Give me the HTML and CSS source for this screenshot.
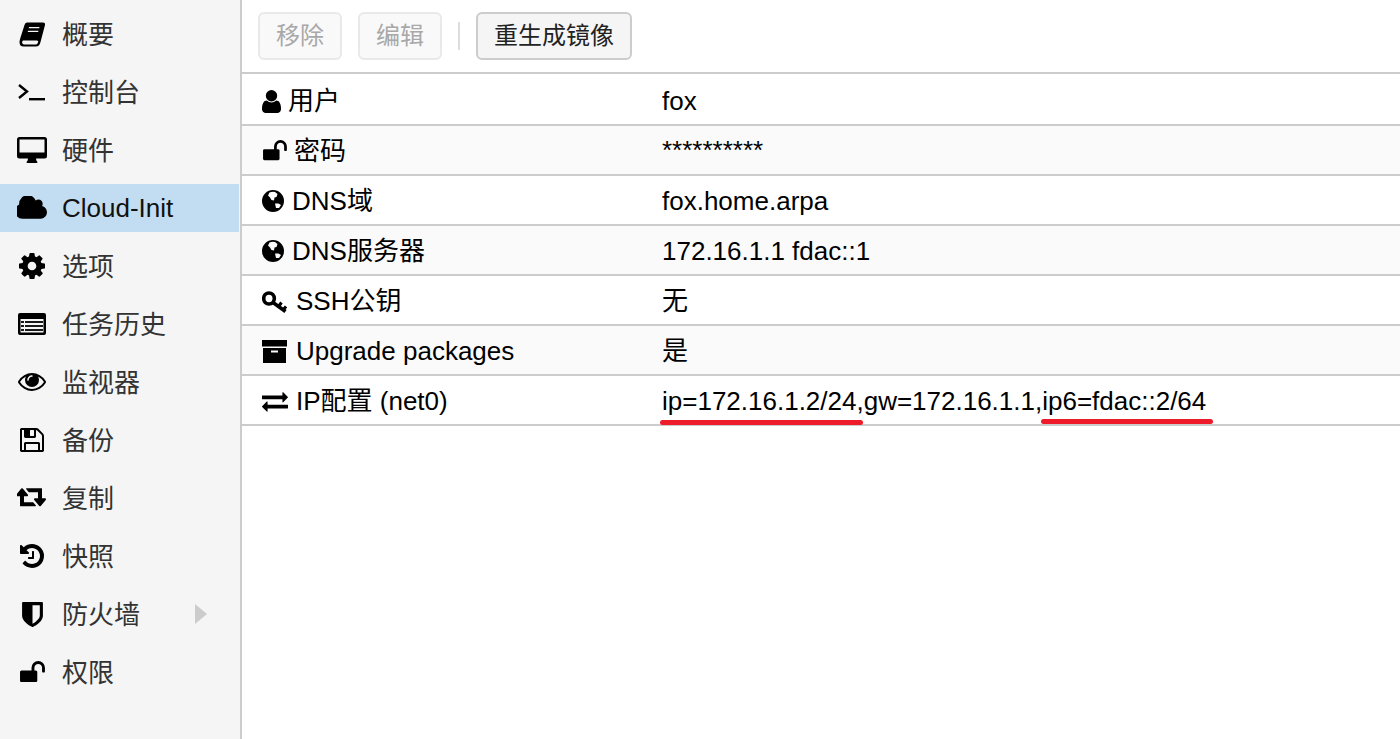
FILE: index.html
```html
<!DOCTYPE html>
<html lang="zh-CN">
<head>
<meta charset="utf-8">
<title>Cloud-Init</title>
<link rel="stylesheet" href="styles.css">
</head>
<body>
<div class="app">
  <nav class="sidebar">
    <div class="nav-item"><span class="nav-icon"><svg width="27" height="25" viewBox="0 0 27 25"><path fill-rule="evenodd" d="M8 .5H24Q26.500 .5 26 3L21.500 20Q20.500 24.500 17 24.500H4.500Q.5 24.500 .5 20Q.5 18.500 1.500 15.500L5.500 3Q6 .5 8 .5ZM10 5L9.700 6.200H20.200L20.500 5ZM9 8.800L8.700 10H19.200L19.500 8.800ZM4 18.500Q2.700 19.500 3.200 21Q3.800 22.500 5.500 22.500H16.500Q18 22.500 18.800 21L19.200 19Q19 18.500 17.500 18.500Z"/></svg></span><span>概要</span></div>
    <div class="nav-item"><span class="nav-icon"><svg width="28" height="18" viewBox="0 0 28 18"><path d="M1 2L9 8.500L1 15" fill="none" stroke="#000" stroke-width="2.400"/><rect x="11" y="15" width="16" height="2.400"/></svg></span><span>控制台</span></div>
    <div class="nav-item"><span class="nav-icon"><svg width="30" height="26" viewBox="0 0 30 26"><path fill-rule="evenodd" d="M2.500 0H27.500Q30 0 30 2.500V19Q30 21.500 27.500 21.500H19Q19 23.500 20.500 25Q20.500 26 19.500 26H10.500Q9.500 26 9.500 25Q11 23.500 11 21.500H2.500Q0 21.500 0 19V2.500Q0 0 2.500 0ZM2.500 2.500V15.500H27.500V2.500Z"/></svg></span><span>硬件</span></div>
    <div class="nav-item selected"><span class="nav-icon"><svg width="30" height="24" viewBox="64 256 1792 1280"><path d="M1856 1152q0 159-112.500 271.500t-271.500 112.500h-1088q-185 0-316.500-131.500t-131.500-316.500q0-132 71-241.500t187-163.500q-2-28-2-43 0-212 150-362t362-150q158 0 286.500 88t187.500 230q70-62 166-62 106 0 181 75t75 181q0 75-41 138 129 30 213 134.500t84 239.500z"/></svg></span><span>Cloud-Init</span></div>
    <div class="nav-item"><span class="nav-icon"><svg width="26" height="26" viewBox="128 128 1536 1536"><path d="M1152 896q0-106-75-181t-181-75-181 75-75 181 75 181 181 75 181-75 75-181zm512-109v222q0 12-8 23t-20 13l-185 28q-19 54-39 91 35 50 107 138 10 12 10 25t-9 23q-27 37-99 108t-94 71q-12 0-26-9l-138-108q-44 23-91 38-16 136-29 186-7 28-36 28h-222q-14 0-24.500-8.500t-11.500-21.500l-28-184q-49-16-90-37l-141 107q-10 9-25 9-14 0-25-11-126-114-165-168-7-10-7-23 0-12 8-23 15-21 51-66.500t54-70.500q-27-50-41-99l-183-27q-13-2-21-12.500t-8-23.500v-222q0-12 8-23t19-13l186-28q14-46 39-92-40-57-107-138-10-12-10-24 0-10 9-23 26-36 98.500-107.500t94.500-71.500q13 0 26 10l138 107q44-23 91-38 16-136 29-186 7-28 36-28h222q14 0 24.500 8.500t11.500 21.500l28 184q49 16 90 37l142-107q9-9 24-9 13 0 25 10 129 119 165 170 7 8 7 22 0 12-8 23-15 21-51 66.500t-54 70.500q26 50 41 98l183 28q13 2 21 12.500t8 23.500z"/></svg></span><span>选项</span></div>
    <div class="nav-item"><span class="nav-icon"><svg width="28" height="22" viewBox="0 0 28 22"><path fill-rule="evenodd" d="M2 0H26Q28 0 28 2V20Q28 22 26 22H2Q0 22 0 20V2Q0 0 2 0ZM2.500 6V19.500H25.500V6Z"/><path d="M3 8h3v2H3zM3 12h3v2H3zM3 16h3v2H3zM7 8h18v2H7zM7 12h18v2H7zM7 16h18v2H7z" opacity=".9"/></svg></span><span>任务历史</span></div>
    <div class="nav-item"><span class="nav-icon"><svg width="28" height="20" viewBox="0 320 1792 1152"><path d="M1664 960q-152-236-381-353 61 104 61 225 0 185-131.500 316.500t-316.500 131.500-316.500-131.500-131.500-316.500q0-121 61-225-229 117-381 353 133 205 333.500 326.500t434.500 121.500 434.500-121.500 333.500-326.500zm-720-384q0-20-14-34t-34-14q-125 0-214.500 89.500t-89.500 214.500q0 20 14 34t34 14 34-14 14-34q0-86 61-147t147-61q20 0 34-14t14-34zm848 384q0 34-20 69-140 230-376.500 368.500t-499.500 138.500-499.500-139-376.500-368q-20-35-20-69t20-69q140-229 376.500-368t499.500-139 499.500 139 376.500 368q20 35 20 69z" transform="translate(0 -64)"/></svg></span><span>监视器</span></div>
    <div class="nav-item"><span class="nav-icon"><svg width="24" height="24" viewBox="128 128 1536 1536"><path d="M512 1536h768v-384h-768v384zm896 0h128v-896q0-14-10-38.500t-20-34.500l-281-281q-10-10-34-20t-39-10v416q0 40-28 68t-68 28h-576q-40 0-68-28t-28-68v-416h-128v1280h128v-416q0-40 28-68t68-28h832q40 0 68 28t28 68v416zm-384-928v-320q0-13-9.500-22.500t-22.500-9.500h-192q-13 0-22.500 9.500t-9.500 22.500v320q0 13 9.500 22.500t22.500 9.500h192q13 0 22.500-9.500t9.500-22.500zm640 32v928q0 40-28 68t-68 28h-1344q-40 0-68-28t-28-68v-1344q0-40 28-68t68-28h928q40 0 88 20t76 48l280 280q28 28 48 76t20 88z"/></svg></span><span>备份</span></div>
    <div class="nav-item"><span class="nav-icon"><svg width="30" height="22" viewBox="0 320 1920 1152"><path d="M1216 1392q0 13-9.500 22.500t-22.500 9.500h-960q-8 0-13.500-2t-9-7-5.500-8-3-11.500-1-11.500v-600h-192q-26 0-45-19t-19-45q0-24 15-41l320-384q19-22 49-22t49 22l320 384q15 17 15 41 0 26-19 45t-45 19h-192v384h576q16 0 25 11l160 192q7 10 7 21zm640-416q0 24-15 41l-320 384q-20 23-49 23t-49-23l-320-384q-15-17-15-41 0-26 19-45t45-19h192v-384h-576q-16 0-25-12l-160-192q-7-9-7-20 0-13 9.500-22.500t22.500-9.500h960q8 0 13.500 2t9 7 5.500 8.500 3 11.500 1 11v600h192q26 0 45 19t19 45z"/></svg></span><span>复制</span></div>
    <div class="nav-item"><span class="nav-icon"><svg width="24" height="24" viewBox="128 128 1536 1536"><path d="M1664 896q0 156-61 298t-164 245-245 164-298 61q-172 0-327-72.500t-264-204.500q-7-10-6.500-22.500t8.500-20.500l137-138q10-9 25-9 16 2 23 12 73 95 179 147t225 52q104 0 198.500-40.500t163.500-109.500 109.500-163.500 40.500-198.500-40.500-198.500-109.500-163.500-163.500-109.500-198.500-40.500q-98 0-188 35.500t-160 101.500l137 138q31 30 14 69-17 40-59 40h-448q-26 0-45-19t-19-45v-448q0-42 40-59 39-17 69 14l130 129q107-101 244.500-156.500t284.500-55.500q156 0 298 61t245 164 164 245 61 298zm-640-288v448q0 14-9 23t-23 9h-320q-14 0-23-9t-9-23v-64q0-14 9-23t23-9h224v-352q0-14 9-23t23-9h64q14 0 23 9t9 23z"/></svg></span><span>快照</span></div>
    <div class="nav-item"><span class="nav-icon"><svg width="21" height="25" viewBox="256 128 1280 1536"><path d="M1344 960v-640h-448v1137q119-63 213-137 235-184 235-360zm192-768v768q0 86-33.500 170.500t-83 150-118 127.500-126.500 103-121 77.500-89.500 49.500-42.500 20q-12 6-26 6t-26-6q-16-7-42.500-20t-89.500-49.500-121-77.500-126.500-103-118-127.500-83-150-33.500-170.500v-768q0-26 19-45t45-19h1152q26 0 45 19t19 45z"/></svg></span><span>防火墙</span><span class="nav-arrow"></span></div>
    <div class="nav-item"><span class="nav-icon"><svg width="26" height="23" viewBox="0 128 1728 1536"><path d="M1728 576v256q0 26-19 45t-45 19h-64q-26 0-45-19t-19-45v-256q0-106-75-181t-181-75-181 75-75 181v192h96q40 0 68 28t28 68v576q0 40-28 68t-68 28h-960q-40 0-68-28t-28-68v-576q0-40 28-68t68-28h672v-192q0-185 131.500-316.500t316.500-131.500 316.500 131.500 131.500 316.500z"/></svg></span><span>权限</span></div>
  </nav>
  <main class="content">
    <div class="toolbar">
      <button class="btn" disabled>移除</button>
      <button class="btn" disabled>编辑</button>
      <span class="sep"></span>
      <button class="btn active">重生成镜像</button>
    </div>
    <div class="table">
      <div class="row"><div class="key"><svg class="ki" width="19" height="23" viewBox="256 128 1280 1536"><path d="M1536 1399q0 109-62.500 187t-150.500 78h-854q-88 0-150.500-78t-62.500-187q0-85 8.500-160.500t31.500-152 58.500-131 94-89 134.500-34.500q131 128 313 128t313-128q76 0 134.500 34.500t94 89 58.500 131 31.500 152 8.500 160.500zm-256-887q0 159-112.500 271.500t-271.500 112.500-271.500-112.500-112.500-271.500 112.500-271.500 271.500-112.500 271.500 112.500 112.500 271.500z"/></svg><span class="k1">用户</span></div><div class="val">fox</div></div>
      <div class="row alt"><div class="key"><svg class="ki" width="25" height="22" viewBox="0 128 1728 1536"><path d="M1728 576v256q0 26-19 45t-45 19h-64q-26 0-45-19t-19-45v-256q0-106-75-181t-181-75-181 75-75 181v192h96q40 0 68 28t28 68v576q0 40-28 68t-68 28h-960q-40 0-68-28t-28-68v-576q0-40 28-68t68-28h672v-192q0-185 131.500-316.500t316.500-131.500 316.500 131.500 131.500 316.500z"/></svg><span class="k2">密码</span></div><div class="val stars">**********</div></div>
      <div class="row"><div class="key"><svg class="ki" width="22" height="22" viewBox="0 0 22 22"><path fill-rule="evenodd" d="M11 0a11 11 0 1 0 0 22a11 11 0 0 0 0-22ZM7.500 2.500Q10 1.500 13 2L15.500 4L14.500 7L12.500 7.500L12 10.500L9.500 10L8 7.500L6 5.500ZM13 13.500L16.500 13.500L19 15L17 18L14 18Z"/></svg><span class="k3">DNS域</span></div><div class="val">fox.home.arpa</div></div>
      <div class="row alt"><div class="key"><svg class="ki" width="22" height="22" viewBox="0 0 22 22"><path fill-rule="evenodd" d="M11 0a11 11 0 1 0 0 22a11 11 0 0 0 0-22ZM7.500 2.500Q10 1.500 13 2L15.500 4L14.500 7L12.500 7.500L12 10.500L9.500 10L8 7.500L6 5.500ZM13 13.500L16.500 13.500L19 15L17 18L14 18Z"/></svg><span class="k3">DNS服务器</span></div><div class="val">172.16.1.1 fdac::1</div></div>
      <div class="row"><div class="key"><svg class="ki ki-low" width="25" height="22" viewBox="0 0 25 22"><ellipse cx="7" cy="7.500" rx="5.300" ry="5.500" fill="none" stroke="#000" stroke-width="3.600"/><path d="M11 11.500L23.500 20.500" fill="none" stroke="#000" stroke-width="3.600"/><path d="M16.500 15.500L19.500 11.500M21 19L24 15.500" fill="none" stroke="#000" stroke-width="3"/></svg><span class="k4">SSH公钥</span></div><div class="val">无</div></div>
      <div class="row alt"><div class="key"><svg class="ki" width="25" height="23" viewBox="0 0 25 23"><path fill-rule="evenodd" d="M0 0H25V6.500H0ZM1 8H24V23H1ZM9 10.500V12.500H16V10.500Z"/></svg><span class="k4">Upgrade packages</span></div><div class="val">是</div></div>
      <div class="row"><div class="key"><svg class="ki" width="26" height="22" viewBox="0 192 1792 1408"><path d="M1792 1184v192q0 13-9.500 22.500t-22.500 9.500h-1376v192q0 13-9.500 22.500t-22.500 9.500q-12 0-24-10l-319-320q-9-9-9-22 0-14 9-23l320-320q9-9 23-9 13 0 22.500 9.500t9.500 22.500v192h1376q13 0 22.500 9.500t9.500 22.500zm0-544q0 14-9 23l-320 320q-9 9-23 9-13 0-22.500-9.500t-9.500-22.500v-192h-1376q-13 0-22.500-9.500t-9.500-22.500v-192q0-13 9.500-22.500t22.500-9.500h1376v-192q0-14 9-23t23-9q12 0 24 10l319 319q9 9 9 23z"/></svg><span class="k5">IP配置 (net0)</span></div><div class="val">ip=172.16.1.2/24,gw=172.16.1.1,ip6=fdac::2/64</div><span class="mark mark-a"></span><span class="mark mark-b"></span></div>
    </div>
  </main>
</div>
</body>
</html>
```
FILE: styles.css
```css
* { box-sizing: border-box; }
html, body { margin: 0; height: 100%; background: #fff; overflow: hidden; }
body { font-family: "Liberation Sans", "Noto Sans CJK SC", sans-serif; font-size: 26px; line-height: 30px; color: #000; }
svg { display: block; flex: none; }
.app { display: flex; height: 739px; }
.sidebar { width: 242px; flex: none; background: #f5f5f5; border-right: 2px solid #ccc; padding-top: 10px; display: flex; flex-direction: column; gap: 10px; color: #333; }
.nav-item { height: 48px; display: flex; align-items: center; }
.nav-item:not(.selected) > span:nth-child(2) { padding-top: 2px; }
.nav-item.selected { background: #c2ddf2; color: #111; margin-right: 1px; }
.nav-icon { width: 30px; margin: 0 15px 0 17px; display: flex; justify-content: center; align-items: center; flex: none; }
.nav-arrow { margin-left: 55px; border-left: 12px solid #ccc; border-top: 10px solid transparent; border-bottom: 10px solid transparent; }
.content { flex: 1; min-width: 0; }
.toolbar { height: 74px; border-bottom: 2px solid #ccc; padding: 12px 16px; display: flex; align-items: flex-start; }
.btn { height: 48px; padding: 0 16px; margin: 0 16px 0 0; border: 2px solid #e9e9e9; border-radius: 6px; background: #f9f9f9; color: #a8a8a8; font-family: inherit; font-size: 24px; line-height: 28px; }
.btn.active { border-color: #ccc; background: #f5f5f5; color: #222; margin: 0; }
.sep { width: 2px; height: 28px; margin: 10px 16px 0 0; background: #ddd; }
.row { position: relative; height: 50px; border-bottom: 2px solid #ccc; display: flex; align-items: center; }
.row:first-child { height: 52px; padding-top: 2px; }
.row.alt { background: #fafafa; }
.key { width: 420px; padding: 2px 0 0 20px; display: flex; align-items: center; flex: none; }
.ki-low { margin-top: 2px; }
.k1 { margin-left: 7px; }
.k2 { margin-left: 7px; }
.k3 { margin-left: 8px; }
.k4 { margin-left: 9px; }
.k5 { margin-left: 8px; }
.val { white-space: nowrap; padding-top: 2px; }
.stars { margin-top: -2px; }
.mark { position: absolute; height: 5px; background: #ee1c2b; border-radius: 3px; }
.mark-a { left: 418px; width: 203px; top: 44px; }
.mark-b { left: 799px; width: 172px; top: 43px; }
```
